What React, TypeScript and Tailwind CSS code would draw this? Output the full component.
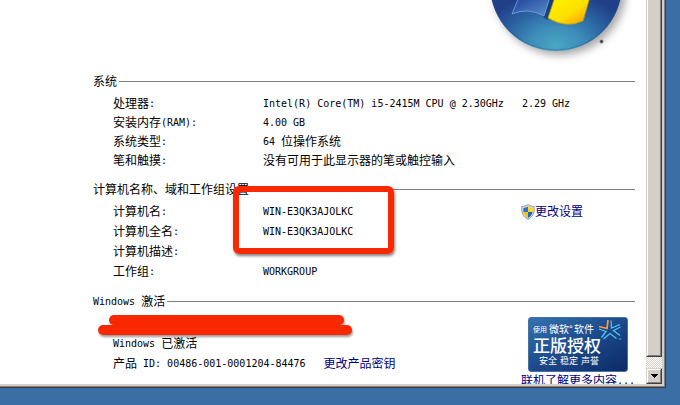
import React from 'react';

// Latin runs are set in a half-width face, so two letters fill one CJK cell
const Mixed: React.FC<{ text: string }> = ({ text }) => (
  <>
    {text.split(/([\x20-\x7e]+)/).map((part, i) =>
      i % 2 === 1 ? (
        <span key={i} className="align-[1px] font-['DejaVu_Sans_Mono',monospace] text-[10px] leading-none whitespace-pre">{part}</span>
      ) : (
        part
      )
    )}
  </>
);

const SectionTitle: React.FC<{ text: string }> = ({ text }) => (
  <div className="flex h-[18px] items-center gap-[2px]">
    <h2 className="shrink-0 leading-[18px]"><Mixed text={text} /></h2>
    <div className="h-px flex-1 bg-[#808080]" />
  </div>
);

const systemRows = [
  { label: '处理器:', value: 'Intel(R) Core(TM) i5-2415M CPU @ 2.30GHz   2.29 GHz' },
  { label: '安装内存(RAM):', value: '4.00 GB' },
  { label: '系统类型:', value: '64 位操作系统' },
  { label: '笔和触摸:', value: '没有可用于此显示器的笔或触控输入' },
];

const nameRows = [
  { label: '计算机名:', value: 'WIN-E3QK3AJOLKC' },
  { label: '计算机全名:', value: 'WIN-E3QK3AJOLKC' },
  { label: '计算机描述:', value: '' },
  { label: '工作组:', value: 'WORKGROUP' },
];

const WindowsLogo = () => (
  <svg viewBox="480 0 140 72" className="block h-[72px] w-[140px] overflow-visible" aria-label="Windows">
    <defs>
      <radialGradient id="orb" gradientUnits="userSpaceOnUse" cx="556" cy="46" r="76" gradientTransform="translate(556 46) scale(1 .72) translate(-556 -46)">
        <stop offset="0" stopColor="#4ba6c4" />
        <stop offset=".35" stopColor="#3d8db8" />
        <stop offset=".65" stopColor="#2c66a4" />
        <stop offset="1" stopColor="#203f88" />
      </radialGradient>
      <linearGradient id="bluePane" x1="0" y1="0" x2="1" y2="1">
        <stop offset="0" stopColor="#1d3f95" />
        <stop offset="1" stopColor="#5b8fd0" />
      </linearGradient>
      <linearGradient id="yellowPane" x1="0" y1="0" x2="1" y2="1">
        <stop offset="0" stopColor="#fff200" />
        <stop offset=".55" stopColor="#ffe100" />
        <stop offset="1" stopColor="#f98f06" />
      </linearGradient>
      <filter id="orbShadow" x="-20%" y="-20%" width="140%" height="140%">
        <feGaussianBlur stdDeviation="4" />
      </filter>
    </defs>
    <circle cx="560" cy="-11" r="66" fill="#777" opacity=".65" filter="url(#orbShadow)" />
    <circle cx="556" cy="-15" r="66" fill="url(#orb)" />
    <circle cx="556" cy="-15" r="65" fill="none" stroke="#23508f" strokeOpacity=".35" />
    <path d="M549 0 L555 0 L548 20 L543 17 Z" fill="#143765" opacity=".75" />
    <path d="M519 -3 L550 -3 L544 16 Q528 7 512 14 Z" fill="url(#bluePane)" stroke="#7aa8dc" strokeWidth=".8" />
    <path d="M555 -3 L590 -3 L583 21 Q566 29 548 18 Z" fill="url(#yellowPane)" stroke="#b59a1c" strokeWidth=".8" />
    <circle cx="601.500" cy="41.500" r="2" fill="#777" />
    <circle cx="601.500" cy="41.500" r="1" fill="#333" />
  </svg>
);

const Shield = () => (
  <svg viewBox="0 0 14 16" className="mt-[2px] h-4 w-[14px] shrink-0" aria-hidden="true">
    <path d="M7 .5C5 2 3 2.300.8 2.500C.4 8 1.500 12.500 7 15.500C12.500 12.500 13.600 8 13.200 2.500C11 2.300 9 2 7 .5Z" fill="#d8dcd8" stroke="#8b9696" strokeWidth=".9" />
    <path d="M7 2.500C5.500 3.500 4 3.900 2.300 4L2.400 8H7Z" fill="#2775d0" />
    <path d="M7 2.500C8.500 3.500 10 3.900 11.700 4L11.600 8H7Z" fill="#ffd51c" />
    <path d="M2.400 8C2.900 10.500 4.300 12.400 7 14V8Z" fill="#f8c20d" />
    <path d="M11.600 8C11.100 10.500 9.700 12.400 7 14V8Z" fill="#1d66be" />
  </svg>
);

const GenuineBadge = () => (
  <div className="flex h-[55px] w-[100px] flex-col rounded-[3px] border border-[#46729f] bg-linear-to-br from-[#3473ae] via-[#1c4a8c] to-[#0d2a66] pt-[5px] pl-1 text-white">
    <div className="flex h-3 items-center leading-3">
      <span className="w-4 text-[7px]">使用</span>
      <span className="w-[25px] text-[10px]">微软°</span>
      <span className="text-[10px]">软件</span>
      <svg viewBox="0 0 24 24" className="mt-1 ml-1 size-6 shrink-0 overflow-visible" fill="none" stroke="#4fc3f0" strokeWidth="1.300" aria-hidden="true">
        <path d="M1 7.500 L9 9.500 L10 1" stroke="#ff9a2e" strokeWidth="1.800" />
        <path d="M13 1.500 L13.500 9 L22 5.500" />
        <path d="M22.500 8 L15.500 11.500 L22 16.500" />
        <path d="M18.500 19.500 L12 14.500 L5.500 20" />
        <path d="M3.500 18.500 L8 12.500 L1 10" />
        <path d="M20.500 20h3" strokeWidth=".7" />
      </svg>
    </div>
    <div className="text-[17px] leading-5 font-medium">正版授权</div>
    <div className="flex gap-[3px] pl-[6px] text-[9px] leading-3">
      <span>安全</span>
      <span>稳定</span>
      <span>声誉</span>
    </div>
  </div>
);

const ScrollBar = () => (
  <div className="flex w-4 shrink-0 flex-col bg-[repeating-conic-gradient(#d4d0c8_0_25%,#ffffff_0_50%)] bg-size-[2px_2px]">
    <div className="flex-1 border-r border-b border-l border-r-[#404040] border-b-[#404040] border-l-[#d4d0c8]">
      <div className="h-full border-r border-b border-l border-r-[#808080] border-b-[#808080] border-l-white bg-[#d4d0c8]" />
    </div>
    <div className="h-[11px]" />
    <button aria-label="向下滚动" className="h-4 border border-t-[#d4d0c8] border-r-[#404040] border-b-[#404040] border-l-[#d4d0c8]">
      <span className="flex h-full items-center justify-center border border-t-white border-r-[#808080] border-b-[#808080] border-l-white bg-[#d4d0c8]">
        <svg viewBox="0 0 7 4" className="h-1 w-[7px]" shapeRendering="crispEdges" aria-hidden="true">
          <path d="M0 0H7V1H6V2H5V3H4V4H3V3H2V2H1V1H0Z" fill="#000" />
        </svg>
      </span>
    </button>
  </div>
);

const App: React.FC = () => {
  return (
    <div className="h-screen overflow-hidden bg-[#3b6ea5] pr-[14px] pb-[17px] font-['Noto_Sans_CJK_SC',sans-serif] text-xs text-black">
      <div className="h-full border-r border-b border-[#404040]">
        <div className="h-full border-r border-b border-[#808080]">
          <div className="flex h-full border-r-2 border-b-2 border-[#d4d0c8] bg-white">
            <main className="min-w-0 flex-1 overflow-hidden pr-[11px] pl-[93px]">
              <div className="flex h-[72px] justify-end pr-[15px]">
                <WindowsLogo />
              </div>

              <section>
                <SectionTitle text="系统" />
                <dl className="mt-[3px] pl-5 leading-[19px]">
                  {systemRows.map((row) => (
                    <div key={row.label} className="flex h-[19px]">
                      <dt className="w-[150px] shrink-0"><Mixed text={row.label} /></dt>
                      <dd className="whitespace-nowrap"><Mixed text={row.value} /></dd>
                    </div>
                  ))}
                </dl>
              </section>

              <section className="relative mt-[11px]">
                <SectionTitle text="计算机名称、域和工作组设置" />
                <div className="mt-[3px] flex pl-5 leading-5">
                  <dl className="flex-1">
                    {nameRows.map((row) => (
                      <div key={row.label} className="flex h-5">
                        <dt className="w-[150px] shrink-0"><Mixed text={row.label} /></dt>
                        <dd className="whitespace-nowrap"><Mixed text={row.value} /></dd>
                      </div>
                    ))}
                  </dl>
                  <a href="#settings" className="flex h-5 w-[114px] items-center text-[#000080]">
                    <Shield />
                    更改设置
                  </a>
                </div>
                {/* marker frame round the two computer names */}
                <div className="absolute top-[6px] left-[140px] h-[68px] w-[161px] rounded-md border-[6px] border-[#fa2800] shadow-[1px_2px_3px_rgba(0,0,0,0.5)]" />
              </section>

              <section className="relative mt-[11px]">
                <SectionTitle text="Windows 激活" />
                <div className="flex pl-5">
                  <div className="flex-1 pt-[23px] leading-5">
                    <p className="h-5"><Mixed text="Windows 已激活" /></p>
                    <p className="flex h-5 gap-[18px] whitespace-nowrap">
                      <span><Mixed text="产品 ID: 00486-001-0001204-84476" /></span>
                      <a href="#key" className="text-[#000080]">更改产品密钥</a>
                    </p>
                  </div>
                  <div className="w-[114px] pt-[7px]">
                    <div className="pl-[7px]">
                      <GenuineBadge />
                    </div>
                    <a href="#genuine" className="block leading-4 whitespace-nowrap text-[#000080]"><Mixed text="联机了解更多内容..." /></a>
                  </div>
                </div>
                {/* marker strokes over the blanked-out line */}
                <div className="absolute top-[23px] left-[5px] drop-shadow-[1px_2px_1px_rgba(0,0,0,0.4)]">
                  <div className="ml-[11px] h-[10px] w-[235px] rounded-full bg-[#fa2800]" />
                  <div className="h-[10px] w-[254px] rounded-full bg-[#fa2800]" />
                </div>
              </section>
            </main>
            <ScrollBar />
          </div>
        </div>
      </div>
    </div>
  );
};

export default App;
